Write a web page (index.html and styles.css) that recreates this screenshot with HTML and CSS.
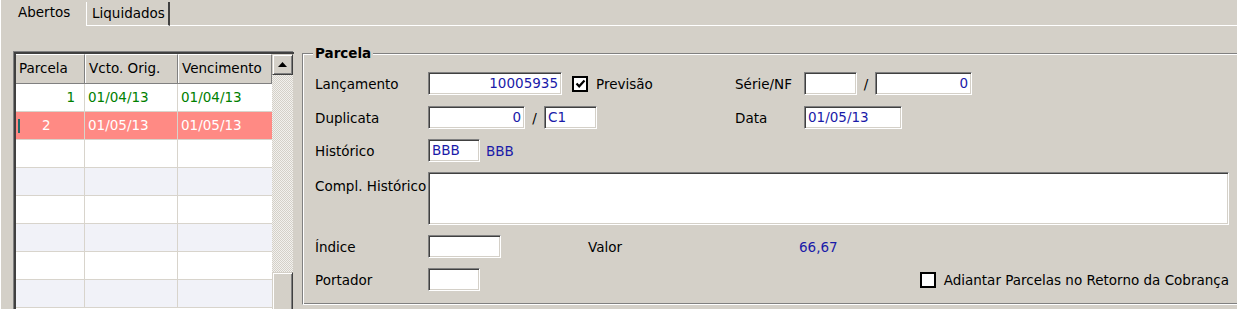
FILE: index.html
```
<!DOCTYPE html>
<html lang="pt-BR">
<head>
  <meta charset="UTF-8" />
  <title>Parcelas</title>
  <link rel="stylesheet" href="styles.css">
</head>
<body>
  <div class="tabs">
    <div class="tab active">Abertos</div>
    <div class="tab">Liquidados</div>
    <div class="tab-fill"></div>
  </div>

  <div class="page">
    <!-- lista de parcelas -->
    <div class="grid">
      <div class="cells">
        <div class="row head">
          <div class="cell">Parcela</div>
          <div class="cell">Vcto. Orig.</div>
          <div class="cell">Vencimento</div>
        </div>
        <div class="row open">
          <div class="cell num">1</div>
          <div class="cell">01/04/13</div>
          <div class="cell">01/04/13</div>
        </div>
        <div class="row selected">
          <div class="cell edit"><span class="caret"></span>2</div>
          <div class="cell">01/05/13</div>
          <div class="cell">01/05/13</div>
        </div>
        <div class="row"><div class="cell"></div><div class="cell"></div><div class="cell"></div></div>
        <div class="row alt"><div class="cell"></div><div class="cell"></div><div class="cell"></div></div>
        <div class="row"><div class="cell"></div><div class="cell"></div><div class="cell"></div></div>
        <div class="row alt"><div class="cell"></div><div class="cell"></div><div class="cell"></div></div>
        <div class="row"><div class="cell"></div><div class="cell"></div><div class="cell"></div></div>
        <div class="row alt"><div class="cell"></div><div class="cell"></div><div class="cell"></div></div>
      </div>
      <div class="scroll">
        <div class="btn up">
          <svg width="9" height="5" viewBox="0 0 9 5"><polygon points="4.5,0 9,5 0,5" fill="#000"/></svg>
        </div>
        <div class="track"></div>
        <div class="btn thumb"></div>
      </div>
    </div>

    <!-- dados da parcela -->
    <div class="group">
      <div class="legend">Parcela</div>
      <div class="form">
        <div class="line">
          <div class="half">
            <span class="lbl">Lançamento</span>
            <span class="fld right w134">10005935</span>
            <span class="chk checked">
              <svg width="11" height="11" viewBox="0 0 11 11"><polyline points="1.5,5.5 4.2,8.3 9.5,2.5" fill="none" stroke="#000" stroke-width="2.2"/></svg>
            </span>
            <span class="chk-text">Previsão</span>
          </div>
          <span class="lbl short">Série/NF</span>
          <span class="fld w53"></span>
          <span class="slash wide">/</span>
          <span class="fld right w97">0</span>
        </div>

        <div class="line second">
          <div class="half">
            <span class="lbl">Duplicata</span>
            <span class="fld right w97">0</span>
            <span class="slash">/</span>
            <span class="fld w53">C1</span>
          </div>
          <span class="lbl short">Data</span>
          <span class="fld w98">01/05/13</span>
        </div>

        <div class="line">
          <span class="lbl">Histórico</span>
          <span class="fld w52">BBB</span>
          <span class="desc">BBB</span>
        </div>

        <div class="line tall">
          <span class="lbl top">Compl. Histórico</span>
          <span class="fld memo"></span>
        </div>

        <div class="line">
          <span class="lbl">Índice</span>
          <span class="fld w73"></span>
          <span class="valor-lbl">Valor</span>
          <span class="desc">66,67</span>
        </div>

        <div class="line">
          <span class="lbl">Portador</span>
          <span class="fld w52"></span>
          <span class="chk push"></span>
          <span class="chk-text">Adiantar Parcelas no Retorno da Cobrança</span>
        </div>
      </div>
    </div>
  </div>
</body>
</html>
```

FILE: styles.css
```
body {
  margin: 0;
  width: 1237px;
  height: 309px;
  overflow: hidden;
  background: #d4d0c8;
  font-family: "DejaVu Sans", Verdana, sans-serif;
  font-size: 13.5px;
  color: #000;
}

/* abas */
.tabs {
  display: flex;
  align-items: flex-start;
  height: 26px;
}
.tab {
  box-sizing: border-box;
  height: 24px;
  margin-top: 2px;
  width: 84px;
  padding-left: 5px;
  line-height: 23px;
  border-left: 1px solid #fff;
  border-right: 2px solid #404040;
  border-bottom: 1px solid #fff;
  white-space: nowrap;
}
.tab.active {
  height: 26px;
  margin-top: 0;
  width: 86px;
  padding-left: 17px;
  line-height: 24px;
  border-right: none;
  border-bottom: none;
}
.tab-fill {
  flex: 1;
  height: 26px;
  box-sizing: border-box;
  border-bottom: 1px solid #fff;
}

.page {
  display: flex;
  align-items: flex-start;
  border-left: 1px solid #fff;
  height: 290px;
  overflow: hidden;
}

/* grade */
.grid {
  flex: none;
  display: flex;
  box-sizing: border-box;
  width: 280px;
  height: 270px;
  margin: 26px 0 0 13px;
  border-top: 2px solid #404040;
  border-left: 2px solid #404040;
  box-shadow: -1px -1px 0 #808080;
}
.cells {
  width: 256px;
  background: #fff;
}
.row {
  display: grid;
  grid-template-columns: 69px 93px 94px;
  height: 28px;
  box-sizing: border-box;
  border-bottom: 1px solid #d8d4cc;
}
.row .cell {
  border-right: 1px solid #d8d4cc;
  padding-left: 3px;
  line-height: 27px;
  white-space: nowrap;
}
.row .cell:last-child {
  border-right: none;
}
.row.alt {
  background: #f1f2f8;
}
.row.head {
  height: 30px;
  background: #d4d0c8;
  border-bottom: 1px solid #808080;
}
.row.head .cell {
  border-top: 1px solid #fff;
  border-left: 1px solid #fff;
  border-right: 1px solid #808080;
  line-height: 27px;
  padding-left: 3px;
}
.row.head .cell:first-child {
  border-left: none;
}
.row.open {
  color: #008000;
}
.cell.num {
  text-align: right;
  padding-right: 9px;
}
.row.selected {
  background: #ff8a84;
  color: #fff;
}
.cell.edit {
  display: flex;
  align-items: center;
  padding-left: 2px;
}
.caret {
  width: 2px;
  height: 14px;
  background: #206a6a;
  margin-right: 22px;
}

.scroll {
  width: 21px;
  display: flex;
  flex-direction: column;
}
.btn {
  box-sizing: border-box;
  background: #d4d0c8;
  border: 1px solid;
  border-color: #d4d0c8 #404040 #404040 #d4d0c8;
  box-shadow: inset 1px 1px #fff, inset -1px -1px #808080;
}
.btn.up {
  height: 21px;
  display: flex;
  align-items: center;
  justify-content: center;
}
.track {
  height: 197px;
  background-color: #fff;
  background-image: repeating-conic-gradient(#d4d0c8 0 25%, #f2f1ee 0 50%);
  background-size: 2px 2px;
}
.thumb {
  height: 40px;
}

/* quadro Parcela */
.group {
  box-sizing: border-box;
  flex: none;
  display: flex;
  flex-direction: column;
  width: 945px;
  height: 252px;
  margin: 27px 0 0 8px;
  border: 1px solid;
  border-color: #808080 #fff #fff #808080;
  box-shadow: inset 1px 1px #fff, inset -1px -1px #808080;
}
.legend {
  align-self: flex-start;
  margin: -9px 0 0 10px;
  padding: 0 2px;
  background: #d4d0c8;
  font-weight: bold;
  line-height: 16px;
}
.form {
  display: flex;
  flex-direction: column;
  gap: 10px;
  padding: 11px 17px 0 12px;
}
.line {
  display: flex;
  align-items: center;
  height: 23px;
}
.line.second {
  margin-top: 1px;
}
.line.tall {
  height: 53px;
  align-items: stretch;
}
.half {
  display: flex;
  align-items: center;
  width: 420px;
}
.lbl {
  width: 113px;
  flex: none;
  white-space: nowrap;
}
.lbl.short {
  width: 69px;
}
.lbl.top {
  padding-top: 6px;
  line-height: 16px;
}
.fld {
  box-sizing: border-box;
  height: 23px;
  flex: none;
  background: #fff;
  border: 1px solid;
  border-color: #808080 #fff #fff #808080;
  box-shadow: inset 1px 1px #404040, inset -1px -1px #d4d0c8;
  color: #1a1aa8;
  padding: 0 3px;
  line-height: 21px;
  white-space: nowrap;
  overflow: hidden;
}
.fld.right {
  text-align: right;
}
.fld.memo {
  flex: 1;
  height: 53px;
}
.w134 { width: 134px; }
.w97 { width: 97px; }
.w98 { width: 98px; }
.w73 { width: 73px; }
.w53 { width: 53px; }
.w52 { width: 52px; }

.slash {
  width: 19px;
  text-align: center;
}
.slash.wide {
  width: 18px;
}
.desc {
  color: #1a1aa8;
  margin-left: 6px;
}
.valor-lbl {
  width: 211px;
  margin-left: 87px;
}
.valor-lbl + .desc {
  margin-left: 0;
}
.chk {
  box-sizing: border-box;
  width: 16px;
  height: 16px;
  border: 2px solid #000;
  background: #fff;
  display: flex;
  align-items: center;
  justify-content: center;
  margin-left: 10px;
}
.chk.push {
  margin-left: auto;
}
.chk-text {
  margin-left: 8px;
  white-space: nowrap;
}
```
